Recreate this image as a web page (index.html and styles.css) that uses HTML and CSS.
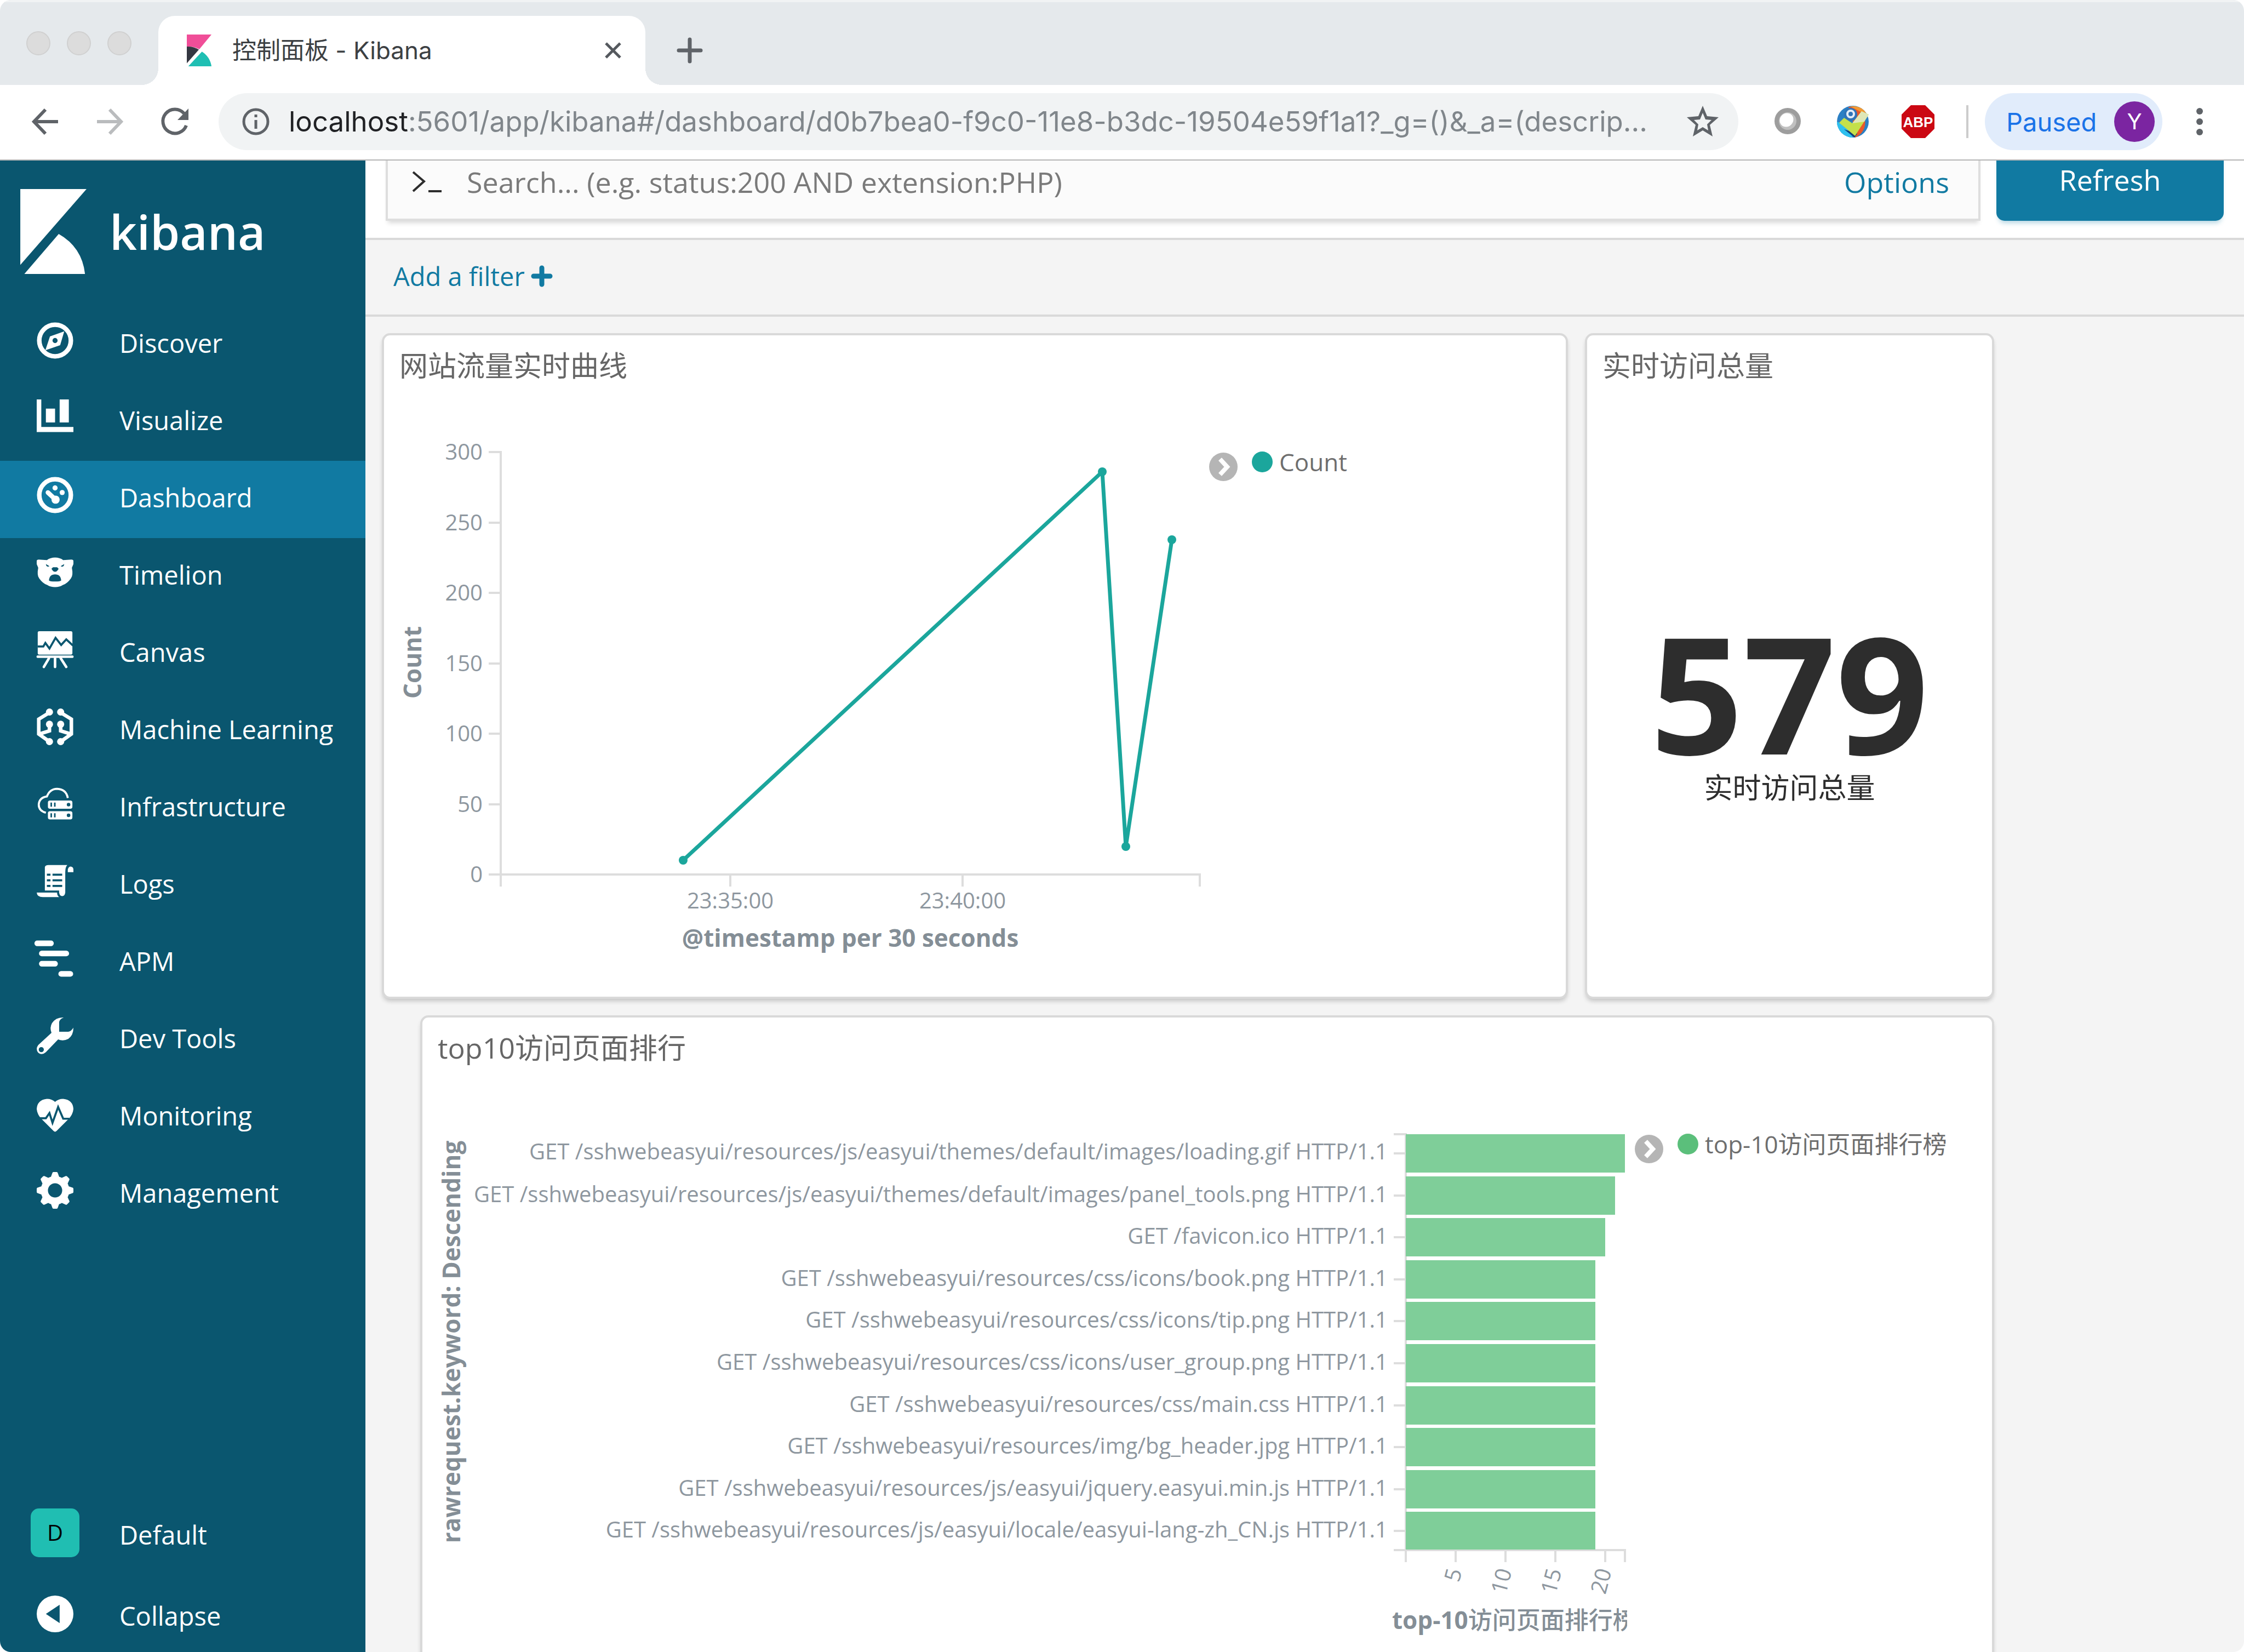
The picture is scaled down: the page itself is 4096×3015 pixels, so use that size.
FILE: index.html
```html
<!DOCTYPE html>
<html lang="zh-CN">
<head>
<meta charset="utf-8">
<title>控制面板 - Kibana</title>
<link rel="stylesheet" href="styles.css">
</head>
<body>
<div class="window">
  <header class="tabstrip">
    <div class="lights"><span class="light"></span><span class="light"></span><span class="light"></span></div>
    <div class="tab">
      <svg class="favicon" viewBox="0 0 49 63" aria-hidden="true">
        <path fill="#f04e98" d="M0 0H49L25 29Q13 23 0 24Z"/>
        <path fill="#343741" d="M0 24Q13 23 24 30L0 57Z"/>
        <path fill="#1fbfb3" d="M3 63L30 34Q46 44 49 63Z"/>
      </svg>
      <span class="tab-title">控制面板 - Kibana</span>
      <button class="icon-btn" type="button" aria-label="Close tab">
        <svg class="tab-close" viewBox="0 0 30 30"><path d="M2 2L28 28M28 2L2 28" stroke="#55595e" stroke-width="5"/></svg>
      </button>
    </div>
    <button class="icon-btn new-tab" type="button" aria-label="New tab">
      <svg class="tab-plus" viewBox="0 0 46 46"><path d="M23 3V43M3 23H43" stroke="#5f6368" stroke-width="7" stroke-linecap="round"/></svg>
    </button>
  </header>

  <div class="toolbar">
    <div class="history">
      <button class="icon-btn" type="button" aria-label="Back"><svg class="i48" viewBox="0 0 48 48"><path d="M25 2L4 24L25 46M4 24H48" fill="none" stroke="#5f6368" stroke-width="6"/></svg></button>
      <button class="icon-btn" type="button" aria-label="Forward"><svg class="i48" viewBox="0 0 48 48"><path d="M23 2L44 24L23 46M44 24H0" fill="none" stroke="#babcbe" stroke-width="6"/></svg></button>
      <button class="icon-btn" type="button" aria-label="Reload"><svg class="i48" viewBox="0 0 48 48"><path d="M40 9A22 22 0 1 0 44 31" fill="none" stroke="#5f6368" stroke-width="6"/><path d="M48 0V21H28Z" fill="#5f6368"/></svg></button>
    </div>
    <div class="omnibox">
      <svg class="i50" viewBox="0 0 50 50" aria-hidden="true"><circle cx="25" cy="25" r="22" fill="none" stroke="#5f6368" stroke-width="5"/><path d="M25 22V38M25 12V17" stroke="#5f6368" stroke-width="5"/></svg>
      <div class="url" role="textbox" aria-label="Address"><span class="host">localhost</span>:5601/app/kibana#/dashboard/d0b7bea0-f9c0-11e8-b3dc-19504e59f1a1?_g=()&amp;_a=(descrip...</div>
      <button class="icon-btn" type="button" aria-label="Bookmark"><svg class="star" viewBox="0 0 58 58"><path fill="#5f6368" fill-rule="evenodd" d="M29 0L37 19L58 21L42 35L47 56L29 45L11 56L16 35L0 21L21 19ZM29 13L24 25L13 26L21 34L19 45L29 39L39 45L37 34L45 26L34 25Z"/></svg></button>
    </div>
    <div class="extensions">
      <button class="icon-btn ext" type="button" aria-label="Proxy">
        <svg class="i60" viewBox="0 0 60 60"><circle cx="30" cy="29" r="24" fill="#9d9d9d"/><path d="M13 46A24 24 0 0 1 47 12A24 24 0 0 0 13 46Z" fill="#bdbdbd"/><circle cx="30" cy="29" r="16" fill="#c0c0c0"/><ellipse cx="28" cy="27" rx="13" ry="12" transform="rotate(-45 28 27)" fill="#fff"/></svg>
      </button>
      <button class="icon-btn ext" type="button" aria-label="Checker">
        <svg class="i60" viewBox="0 0 60 60"><circle cx="30" cy="30" r="29" fill="#2b7fc4"/><path d="M22 3A29 29 0 0 1 34 59L30 30Z" fill="#e8582a"/><path d="M25 2Q48 0 56 18L44 12Z" fill="#f39a33"/><path d="M1 30A29 29 0 0 0 30 59L24 48L6 32Z" fill="#2ec0ee"/><path d="M14 44L33 59L38 52Z" fill="#123d78"/><circle cx="26" cy="17" r="12" fill="#2f74b8"/><circle cx="26" cy="16" r="6" fill="none" stroke="#e3edf8" stroke-width="4"/><path d="M5 32L14 23L29 33L46 11L59 17L34 56Z" fill="#c4e04a"/><path d="M29 33L46 11L59 17L51 30Z" fill="#dfe7b8"/></svg>
      </button>
      <button class="icon-btn ext" type="button" aria-label="Adblock Plus">
        <svg class="i60" viewBox="0 0 60 60"><path d="M17 0H43L60 17V43L43 60H17L0 43V17Z" fill="#cb0813"/><text class="abp" x="30" y="40" text-anchor="middle">ABP</text></svg>
      </button>
    </div>
    <span class="divider"></span>
    <button class="profile" type="button">Paused <span class="avatar">Y</span></button>
    <button class="icon-btn kebab" type="button" aria-label="Menu"><svg class="dots" viewBox="0 0 12 50"><circle cx="6" cy="6" r="6"/><circle cx="6" cy="25" r="6"/><circle cx="6" cy="44" r="6"/></svg></button>
  </div>

  <div class="app">
    <aside class="sidebar">
      <a class="brand" href="#/">
        <svg class="brand-mark" viewBox="0 0 131 168" aria-hidden="true"><path fill="#fff" d="M0 0H131L0 150ZM8 168L76 89Q122 115 128 168Z"/></svg>
        <span>kibana</span>
      </a>
      <nav class="nav">
        <a class="nav-item" href="#/discover"><svg class="nav-icon" viewBox="0 0 72 72"><circle cx="36" cy="36" r="31" fill="none" stroke="#fff" stroke-width="9"/><path fill="#fff" fill-rule="evenodd" d="M17 55L26 28L54 18L46 45ZM36 31A5 5 0 1 0 36 41A5 5 0 1 0 36 31Z"/></svg>Discover</a>
        <a class="nav-item" href="#/visualize"><svg class="nav-icon" viewBox="0 0 72 72"><path fill="#fff" d="M0 0H9V54H72V64H0ZM18 18H36V45H18ZM45 0H63V45H45Z"/></svg>Visualize</a>
        <a class="nav-item active" href="#/dashboard"><svg class="nav-icon" viewBox="0 0 72 72"><circle cx="36" cy="36" r="31" fill="none" stroke="#fff" stroke-width="9"/><g fill="#fff"><circle cx="36" cy="22" r="5"/><circle cx="50" cy="31" r="5"/><circle cx="37" cy="45" r="8"/></g><path d="M22 31L36 44" stroke="#fff" stroke-width="9" stroke-linecap="round"/></svg>Dashboard</a>
        <a class="nav-item" href="#/timelion"><svg class="nav-icon" viewBox="0 0 72 72"><path fill="#fff" fill-rule="evenodd" d="M0 14Q0 11 4 11L20 12Q27 7 36 7Q45 7 52 12L68 11Q72 11 72 14V20L69 27Q72 42 67 48Q60 58 51 61Q45 65 36 65Q27 65 21 61Q12 58 5 48Q0 42 3 27L0 20ZM18 20Q19 27 25 24ZM54 20Q53 27 47 24ZM29 29L32 26H40L43 29Q40 35 36 35Q32 35 29 29ZM24 52Q25 40 36 40Q47 40 48 52Q46 54 36 54Q26 54 24 52Z"/></svg>Timelion</a>
        <a class="nav-item" href="#/canvas"><svg class="nav-icon" viewBox="0 0 72 72"><rect x="2" width="68" height="46" rx="3" fill="#fff"/><path d="M2 30H13L17 23L25 34L37 13L48 27L58 16L71 28" fill="none" stroke="#0a566f" stroke-width="4"/><path d="M2 50H70M24 53L14 70M36 53V70M47 53L58 70" stroke="#fff" stroke-width="5" stroke-linecap="round"/></svg>Canvas</a>
        <a class="nav-item" href="#/ml"><svg class="nav-icon" viewBox="0 0 72 72"><path d="M25 8L4 21V50L25 65M25 31V44L5 50M47 8L68 21V50L47 65M47 31V44L67 50" fill="none" stroke="#fff" stroke-width="7"/><g fill="#fff"><circle cx="25" cy="7" r="7"/><circle cx="47" cy="7" r="7"/><circle cx="25" cy="31" r="7"/><circle cx="47" cy="31" r="7"/><circle cx="25" cy="65" r="7"/><circle cx="47" cy="65" r="7"/></g></svg>Machine Learning</a>
        <a class="nav-item" href="#/infra"><svg class="nav-icon" viewBox="0 0 72 72"><path d="M18 53Q4 49 4 37Q5 23 20 21Q26 6 40 6Q58 7 61 24" fill="none" stroke="#fff" stroke-width="4"/><path fill="#fff" fill-rule="evenodd" d="M26 29H66Q70 29 70 33V41Q70 45 66 45H26Q22 45 22 41V33Q22 29 26 29ZM27 33V41H30V33ZM34 33V41H37V33ZM59 37A3 3 0 1 0 66 37A3 3 0 1 0 59 37ZM26 50H66Q70 50 70 54V62Q70 66 66 66H26Q22 66 22 62V54Q22 50 26 50ZM27 54V62H30V54ZM34 54V62H37V54ZM59 58A3 3 0 1 0 66 58A3 3 0 1 0 59 58Z"/></svg>Infrastructure</a>
        <a class="nav-item" href="#/logs"><svg class="nav-icon" viewBox="0 0 72 72"><path fill="#fff" fill-rule="evenodd" d="M16 8Q17 4 23 4H60Q56 8 56 18V58Q55 65 50 65Q45 65 44 58V54H16ZM20 21V25H27V21ZM31 21V25H50V21ZM20 32V36H27V32ZM31 32V36H50V32ZM20 43V47H27V43ZM31 43V47H50V43ZM61 18V13Q62 7 67 7Q72 8 72 13V18ZM0 58H40Q40 64 44 67H12Q1 67 0 58Z"/></svg>Logs</a>
        <a class="nav-item" href="#/apm"><svg class="nav-icon" viewBox="0 0 72 72"><path d="M1 6H28M10 26H58M10 46H36M48 66H66" stroke="#fff" stroke-width="11" stroke-linecap="round"/></svg>APM</a>
        <a class="nav-item" href="#/dev_tools"><svg class="nav-icon" viewBox="0 0 72 72"><path fill="#fff" fill-rule="evenodd" d="M53 0Q45 3 44 9V28H62Q68 27 72 20Q72 35 62 42Q52 47 42 43L18 68Q10 75 3 69Q-3 62 3 54L29 30Q25 20 30 11Q38 -1 53 0ZM9 58A5 5 0 1 0 9 68A5 5 0 1 0 9 58Z"/></svg>Dev Tools</a>
        <a class="nav-item" href="#/monitoring"><svg class="nav-icon" viewBox="0 0 72 72"><path fill="#fff" d="M36 14Q30 8 20 8Q1 10 0 28Q1 40 12 50L33 71Q36 74 39 71L60 50Q71 40 72 28Q71 10 52 8Q42 8 36 14Z"/><path d="M4 46H18L25 36L31 55L42 24L52 47H64" fill="none" stroke="#0a566f" stroke-width="4"/></svg>Monitoring</a>
        <a class="nav-item" href="#/management"><svg class="nav-icon" viewBox="0 0 72 72"><circle cx="36" cy="36" r="21" fill="none" stroke="#fff" stroke-width="14"/><g fill="#fff"><path id="tooth" d="M27 12L31 1Q32 0 33 0H39Q40 0 41 1L45 12Z"/><use href="#tooth" transform="rotate(45 36 36)"/><use href="#tooth" transform="rotate(90 36 36)"/><use href="#tooth" transform="rotate(135 36 36)"/><use href="#tooth" transform="rotate(180 36 36)"/><use href="#tooth" transform="rotate(225 36 36)"/><use href="#tooth" transform="rotate(270 36 36)"/><use href="#tooth" transform="rotate(315 36 36)"/></g></svg>Management</a>
      </nav>
      <div class="sidebar-foot">
        <a class="foot-item" href="#/spaces"><span class="space">D</span>Default</a>
        <button class="foot-item collapse" type="button"><svg class="nav-icon" viewBox="0 0 72 72"><path fill="#fff" fill-rule="evenodd" d="M36 0A36 36 0 1 0 36 72A36 36 0 1 0 36 0ZM18 36L45 18V54Z"/></svg>Collapse</button>
      </div>
    </aside>

    <main class="main">
      <form class="querybar">
        <div class="searchbox">
          <svg class="prompt" viewBox="0 0 54 38" aria-hidden="true"><path d="M2 1L22 18L2 36" fill="none" stroke="#2d2d2d" stroke-width="4"/><path d="M30 36H54" stroke="#2d2d2d" stroke-width="4"/></svg>
          <input class="search" type="text" aria-label="Search" placeholder="Search... (e.g. status:200 AND extension:PHP)">
          <button class="options" type="button">Options</button>
        </div>
        <button class="refresh" type="button">Refresh</button>
      </form>
      <div class="filterbar">
        <a class="add-filter" href="#/filter">Add a filter <svg class="plus" viewBox="0 0 38 38" aria-hidden="true"><path d="M19 4V34M4 19H34" stroke="#117aa2" stroke-width="9" stroke-linecap="round"/></svg></a>
      </div>

      <div class="dashboard">
        <section class="panel">
          <h2 class="panel-title">网站流量实时曲线</h2>
          <div class="vis">
            <svg class="chart chart-line" viewBox="0 0 1464 1097">
              <text class="axis-title" text-anchor="middle" transform="translate(40 487) rotate(-90)">Count</text>
              <g transform="translate(185 103)">
                <path class="axis" d="M-22 0H0M-22 129H0M-22 257H0M-22 386H0M-22 514H0M-22 643H0M-22 771H1276M0 -2V793M419 771V793M843 771V793M1276 769V793"/>
                <g class="tick" text-anchor="end">
                  <text x="-33" y="14">300</text><text x="-33" y="143">250</text><text x="-33" y="271">200</text><text x="-33" y="400">150</text><text x="-33" y="528">100</text><text x="-33" y="657">50</text><text x="-33" y="785">0</text>
                </g>
                <g class="tick" text-anchor="middle"><text x="419" y="833">23:35:00</text><text x="843" y="833">23:40:00</text></g>
                <text class="axis-title" x="638" y="903" text-anchor="middle">@timestamp per 30 seconds</text>
                <path class="series" d="M333 745L1098 36L1141 720L1225 160"/>
                <g class="points"><circle cx="333" cy="745" r="8"/><circle cx="1098" cy="36" r="8"/><circle cx="1141" cy="720" r="8"/><circle cx="1225" cy="160" r="8"/></g>
              </g>
            </svg>
            <button class="icon-btn legend-toggle" type="button" aria-label="Toggle legend"><svg class="i52" viewBox="0 0 52 52"><circle cx="26" cy="26" r="26" fill="#b5b5b5"/><path d="M20 12L33 26L20 40" fill="none" stroke="#fff" stroke-width="8"/></svg></button>
            <ul class="legend"><li><span class="dot teal"></span>Count</li></ul>
          </div>
        </section>

        <section class="panel">
          <h2 class="panel-title">实时访问总量</h2>
          <div class="metric">
            <div class="metric-value">579</div>
            <div class="metric-label">实时访问总量</div>
          </div>
        </section>

        <section class="panel wide">
          <h2 class="panel-title">top10访问页面排行</h2>
          <div class="vis">
            <svg class="chart chart-bar" viewBox="0 0 2171 1097">
              <text class="axis-title" text-anchor="middle" transform="translate(41 482) rotate(-90)">rawrequest.keyword: Descending</text>
              <g transform="translate(1767 103)">
                <path class="axis" d="M-22 0H0M-22 35H0M-22 112H0M-22 188H0M-22 265H0M-22 341H0M-22 418H0M-22 495H0M-22 571H0M-22 648H0M-22 724H0M-22 759H402M0 -2V781M91 759V781M182 759V781M273 759V781M364 759V781M400 759V781"/>
                <g class="bars">
                  <rect width="400" height="70"/><rect y="77" width="382" height="70"/><rect y="153" width="364" height="70"/><rect y="230" width="346" height="70"/><rect y="306" width="346" height="70"/><rect y="383" width="346" height="70"/><rect y="460" width="346" height="70"/><rect y="536" width="346" height="70"/><rect y="613" width="346" height="70"/><rect y="689" width="346" height="69"/>
                </g>
                <g class="tick" text-anchor="end">
                  <text x="-33" y="46">GET /sshwebeasyui/resources/js/easyui/themes/default/images/loading.gif HTTP/1.1</text>
                  <text x="-33" y="124">GET /sshwebeasyui/resources/js/easyui/themes/default/images/panel_tools.png HTTP/1.1</text>
                  <text x="-33" y="200">GET /favicon.ico HTTP/1.1</text>
                  <text x="-33" y="277">GET /sshwebeasyui/resources/css/icons/book.png HTTP/1.1</text>
                  <text x="-33" y="353">GET /sshwebeasyui/resources/css/icons/tip.png HTTP/1.1</text>
                  <text x="-33" y="430">GET /sshwebeasyui/resources/css/icons/user_group.png HTTP/1.1</text>
                  <text x="-33" y="507">GET /sshwebeasyui/resources/css/main.css HTTP/1.1</text>
                  <text x="-33" y="583">GET /sshwebeasyui/resources/img/bg_header.jpg HTTP/1.1</text>
                  <text x="-33" y="660">GET /sshwebeasyui/resources/js/easyui/jquery.easyui.min.js HTTP/1.1</text>
                  <text x="-33" y="736">GET /sshwebeasyui/resources/js/easyui/locale/easyui-lang-zh_CN.js HTTP/1.1</text>
                  <text transform="translate(103 797) rotate(-75)">5</text><text transform="translate(194 797) rotate(-75)">10</text><text transform="translate(285 797) rotate(-75)">15</text><text transform="translate(376 797) rotate(-75)">20</text>
                </g>
                <text class="axis-title" x="-25" y="903">top-10<tspan class="cjk">访问页面排行榜</tspan></text>
              </g>
            </svg>
            <button class="icon-btn legend-toggle" type="button" aria-label="Toggle legend"><svg class="i52" viewBox="0 0 52 52"><circle cx="26" cy="26" r="26" fill="#b5b5b5"/><path d="M20 12L33 26L20 40" fill="none" stroke="#fff" stroke-width="8"/></svg></button>
            <ul class="legend"><li><span class="dot green"></span>top-10访问页面排行榜</li></ul>
          </div>
        </section>
      </div>
    </main>
  </div>
</div>
</body>
</html>
```
FILE: styles.css
```css
* { box-sizing: border-box; }

body {
  margin: 0;
  background: #fff;
  font-family: "Open Sans", "Noto Sans CJK SC", sans-serif;
  color: #2d2d2d;
}

button {
  border: 0;
  padding: 0;
  margin: 0;
  background: none;
  font: inherit;
  color: inherit;
  cursor: pointer;
}

a { color: inherit; text-decoration: none; }
svg { display: block; flex: none; overflow: visible; }
.icon-btn { flex: none; }

.window {
  display: flex;
  flex-direction: column;
  height: 100vh;
  overflow: hidden;
  border-radius: 20px;
}

/* browser tabs */
.tabstrip {
  display: flex;
  flex: none;
  align-items: flex-end;
  height: 155px;
  background: #e5e9ec;
  border-top: 4px solid #f1f3f4;
  font-family: Inter, "Noto Sans CJK SC", sans-serif;
}

.lights {
  display: flex;
  gap: 30px;
  margin-left: 48px;
  padding-bottom: 54px;
}

.light {
  width: 44px;
  height: 44px;
  border: 2px solid #d0d0d0;
  border-radius: 50%;
  background: #dcdcdc;
}

.tab {
  position: relative;
  display: flex;
  align-items: center;
  width: 889px;
  height: 126px;
  margin-left: 49px;
  padding: 0 44px 0 52px;
  border-radius: 30px 30px 0 0;
  background: #fff;
}

.tab::before,
.tab::after {
  content: "";
  position: absolute;
  bottom: 0;
  width: 30px;
  height: 30px;
}

.tab::before { right: 100%; background: radial-gradient(circle at 0 0, transparent 30px, #fff 30px); }
.tab::after { left: 100%; background: radial-gradient(circle at 100% 0, transparent 30px, #fff 30px); }

.favicon { width: 45px; height: 60px; }
.tab-title { flex: 1; margin-left: 38px; font-size: 44px; line-height: 60px; color: #3c4043; }
.tab-close { width: 30px; height: 30px; }
.new-tab { margin: 0 0 40px 58px; }
.tab-plus { width: 46px; height: 46px; }

/* address bar */
.toolbar {
  display: flex;
  flex: none;
  align-items: center;
  height: 138px;
  padding: 0 75px 2px 58px;
  border-bottom: 2px solid #b5b5b5;
  background: #fff;
  font-family: Inter, sans-serif;
}

.history { display: flex; gap: 71px; }
.i48 { width: 48px; height: 48px; }
.i50 { width: 50px; height: 50px; }
.i52 { width: 52px; height: 52px; }
.i60 { width: 60px; height: 60px; }

.omnibox {
  display: flex;
  flex: 1;
  align-items: center;
  min-width: 0;
  height: 104px;
  margin-left: 55px;
  padding: 0 36px 0 43px;
  border-radius: 52px;
  background: #f1f3f4;
}

.url {
  flex: 1;
  min-width: 0;
  margin: 0 20px 0 35px;
  overflow: hidden;
  white-space: nowrap;
  font-size: 51px;
  line-height: 70px;
  color: #80868b;
}

.host { color: #202124; }
.star { width: 58px; height: 58px; }
.extensions { display: flex; gap: 59px; margin-left: 60px; }
.abp { font: 700 26px "Liberation Sans", sans-serif; fill: #fff; }
.divider { width: 4px; height: 60px; margin: 0 30px 0 58px; background: #ccc; }

.profile {
  display: flex;
  align-items: center;
  justify-content: space-between;
  width: 324px;
  height: 104px;
  padding: 0 14px 0 39px;
  border-radius: 52px;
  background: #e1ecfb;
  font-size: 47px;
  color: #1a73e8;
}

.avatar {
  width: 74px;
  height: 74px;
  border-radius: 50%;
  background: #7b25a1;
  font-size: 40px;
  line-height: 74px;
  text-align: center;
  color: #fff;
}

.kebab { margin-left: 62px; }
.dots { width: 12px; height: 50px; fill: #5f6368; }

/* app shell */
.app { display: flex; flex: 1; min-height: 0; }

.sidebar {
  display: flex;
  flex: none;
  flex-direction: column;
  width: 667px;
  background: #0a566f;
  font-size: 47px;
  line-height: 66px;
  color: #fff;
}

.brand {
  display: flex;
  flex: none;
  gap: 42px;
  height: 266px;
  padding: 52px 0 0 37px;
  font-size: 87px;
  font-weight: 600;
  line-height: 154px;
}

.brand-mark { width: 121px; height: 155px; }

.nav-item {
  display: flex;
  align-items: center;
  gap: 84px;
  height: 141px;
  padding: 0 0 8px 67px;
}

.nav-item.active { background: #117aa2; }
.nav-icon { width: 67px; height: 67px; margin-bottom: 8px; }
.sidebar-foot { margin-top: auto; }

.foot-item {
  display: flex;
  align-items: center;
  gap: 73px;
  width: 100%;
  height: 148px;
  padding: 0 0 16px 56px;
}

.collapse { gap: 84px; height: 132px; padding: 0 0 0 67px; }

.space {
  width: 89px;
  height: 89px;
  margin-bottom: 8px;
  border-radius: 15px;
  background: #20beb2;
  font-size: 40px;
  line-height: 87px;
  text-align: center;
  color: #000;
}

.main { flex: 1; min-width: 0; overflow: hidden; background: #f4f4f4; }

.querybar {
  display: flex;
  align-items: flex-end;
  gap: 29px;
  height: 145px;
  padding: 0 37px 31px;
  border-bottom: 4px solid #d9d9d9;
  background: #fff;
  font-size: 52px;
  line-height: 70px;
}

.searchbox {
  display: flex;
  flex: 1;
  align-items: center;
  height: 142px;
  padding: 0 53px 0 44px;
  border: 4px solid #dedede;
  background: #fbfbfb;
  box-shadow: 0 8px 8px -4px rgba(0, 0, 0, .15);
}

.prompt { width: 54px; height: 38px; }

.search {
  flex: 1;
  min-width: 0;
  margin-left: 46px;
  padding: 0;
  border: 0;
  background: none;
  font: inherit;
  outline: 0;
}

.search::placeholder { color: #7a7a7a; opacity: 1; }
.options { color: #117aa2; }

.refresh {
  width: 415px;
  height: 151px;
  border-radius: 15px;
  background: #117aa2;
  box-shadow: 0 8px 8px -4px rgba(17, 122, 162, .3);
  color: #fff;
}

.filterbar {
  display: flex;
  align-items: center;
  height: 140px;
  padding: 0 51px 4px;
  border-bottom: 4px solid #d9d9d9;
}

.add-filter {
  display: flex;
  align-items: center;
  gap: 12px;
  font-size: 47px;
  line-height: 66px;
  color: #117aa2;
}

.plus { width: 38px; height: 38px; }

/* dashboard grid */
.dashboard {
  display: grid;
  grid-template-columns: 2165fr 747fr;
  gap: 30px 31px;
  margin: 30px 456px 0 30px;
}

.panel {
  display: flex;
  flex-direction: column;
  min-width: 0;
  border: 4px solid #d9d9d9;
  border-radius: 15px;
  background: #fff;
  box-shadow: 0 6px 8px -2px rgba(0, 0, 0, .2);
}

.wide { grid-column: 1 / -1; margin-left: 70px; }

.panel-title {
  margin: 0;
  padding: 0 28px;
  font-size: 52px;
  font-weight: 400;
  line-height: 110px;
  color: #666;
}

.vis { display: flex; align-items: flex-start; padding: 0 28px; }
.chart { height: 1097px; overflow: hidden; }
.chart-line { width: 1464px; }
.chart-bar { width: 2171px; }
.axis { fill: none; stroke: #ddd; stroke-width: 4; }
.tick { font-size: 40px; fill: #8e979f; }
.axis-title { font-size: 44px; font-weight: 700; fill: #848e96; }
.cjk { font-weight: 500; }
.series { fill: none; stroke: #1ba69c; stroke-width: 7; stroke-linejoin: round; }
.points { fill: #1ba69c; }
.bars { fill: #7fce99; }

.legend-toggle { margin: 104px 0 0 14px; }

.legend {
  margin: 91px 0 0 26px;
  padding: 0;
  list-style: none;
  font-size: 44px;
  line-height: 60px;
  color: #6e6e6e;
}

.legend li { display: flex; align-items: center; gap: 12px; white-space: nowrap; }
.dot { width: 38px; height: 38px; border-radius: 50%; }
.teal { background: #1ba69c; }
.green { background: #5bbf7b; }

.metric {
  display: flex;
  flex: 1;
  flex-direction: column;
  align-items: center;
  justify-content: center;
  padding-top: 37px;
}

.metric-value { font-size: 296px; font-weight: 700; line-height: 296px; }
.metric-label { font-size: 52px; line-height: 52px; }
```
